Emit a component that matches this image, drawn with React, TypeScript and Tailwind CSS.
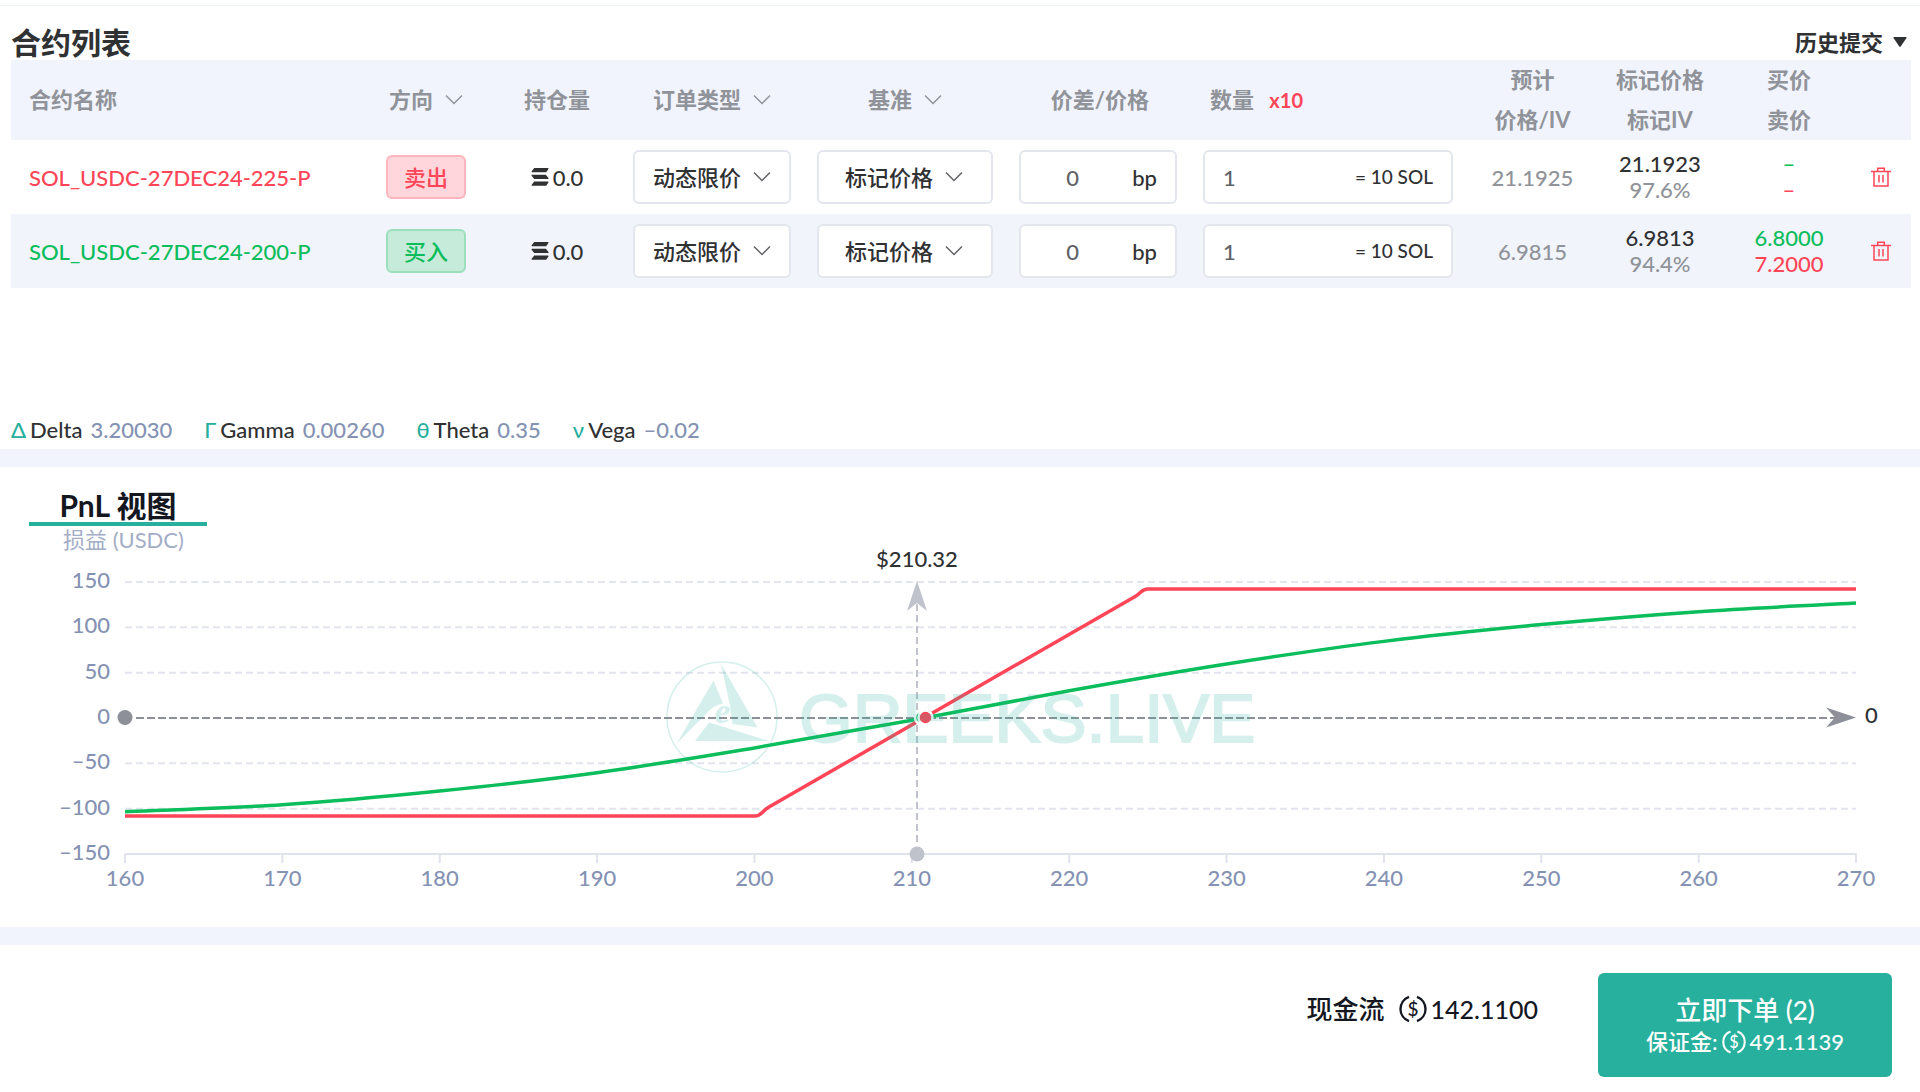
import { useState } from 'react'

type Side = 'sell' | 'buy'

type Contract = {
  name: string
  side: Side
  position: string
  estimate: string
  mark: string
  markIv: string
  bid: string
  ask: string
}

const initialContracts: Contract[] = [
  { name: 'SOL_USDC-27DEC24-225-P', side: 'sell', position: '0.0', estimate: '21.1925', mark: '21.1923', markIv: '97.6%', bid: '–', ask: '–' },
  { name: 'SOL_USDC-27DEC24-200-P', side: 'buy', position: '0.0', estimate: '6.9815', mark: '6.9813', markIv: '94.4%', bid: '6.8000', ask: '7.2000' },
]

const greeks = [
  { symbol: 'Δ', label: 'Delta', value: '3.20030' },
  { symbol: 'Γ', label: 'Gamma', value: '0.00260' },
  { symbol: 'θ', label: 'Theta', value: '0.35' },
  { symbol: 'ν', label: 'Vega', value: '–0.02' },
]

const yTicks = [150, 100, 50, 0, -50, -100, -150]
const xTicks = [160, 170, 180, 190, 200, 210, 220, 230, 240, 250, 260, 270]

// theoretical pnl at each x tick
const currentPnl = [-103.3, -95.6, -80.5, -60.3, -33, -2.5, 30, 59.5, 84.5, 103, 117.3, 126.8]

const px = (price: number) => 125 + ((price - 160) * 1731) / 110
const py = (pnl: number) => 192 - (pnl * 136) / 150

function smoothPath(values: number[]) {
  const pts = values.map((v, i) => [px(xTicks[i]), py(v)])
  let d = `M${pts[0][0]} ${pts[0][1]}`
  for (let i = 0; i < pts.length - 1; i++) {
    const p0 = pts[i - 1] || pts[i]
    const p1 = pts[i]
    const p2 = pts[i + 1]
    const p3 = pts[i + 2] || p2
    d += ` C${p1[0] + (p2[0] - p0[0]) / 6} ${p1[1] + (p2[1] - p0[1]) / 6} ${p2[0] - (p3[0] - p1[0]) / 6} ${p2[1] - (p3[1] - p1[1]) / 6} ${p2[0]} ${p2[1]}`
  }
  return d
}

function Chevron() {
  return (
    <svg width="18" height="12" viewBox="0 0 18 12" fill="none" stroke="currentColor" strokeWidth="1.5" aria-hidden="true">
      <path d="M1 1.5 9 9.5 17 1.5" />
    </svg>
  )
}

function SolIcon() {
  return (
    <svg width="18" height="18" viewBox="0 0 18 18" fill="currentColor" aria-hidden="true">
      <path d="M3.2 0H17a.6.6 0 0 1 .4 1L15.2 4.2H1.1a.6.6 0 0 1-.4-1Z" />
      <path d="M1 6.8H14.8L17.500 10a.6.6 0 0 1-.4 1H3.2L.6 7.800a.6.6 0 0 1 .4-1Z" />
      <path d="M3.200 13.600H17a.6.6 0 0 1 .4 1L15.200 17.800H1.100a.6.6 0 0 1-.4-1Z" />
    </svg>
  )
}

function UsdcIcon({ size }: { size: number }) {
  return (
    <svg width={size} height={size} viewBox="0 0 28 28" fill="none" stroke="currentColor" strokeWidth="2.4" aria-hidden="true">
      <path d="M10 1.800A13 13 0 0 0 10 26.200M18 1.800A13 13 0 0 1 18 26.200" />
      <text x="14" y="20.500" textAnchor="middle" fontSize="19" fill="currentColor" stroke="none">$</text>
    </svg>
  )
}

function TrashIcon() {
  return (
    <svg width="20" height="20" viewBox="0 0 20 20" fill="none" stroke="currentColor" strokeWidth="1.500" aria-hidden="true">
      <path d="M0 4.500H20M3 4.500V19H17V4.500M6.700 4V1.200H13.300V4M8 8V15.500M12 8V15.500" />
    </svg>
  )
}

function FilterHead({ text }: { text: string }) {
  return (
    <button type="button" className="inline-flex items-center gap-3">
      {text}
      <Chevron />
    </button>
  )
}

function PnlChart() {
  return (
    <svg viewBox="0 0 1920 401" className="block w-full text-[22px]">
      <text x="63" y="22" className="fill-[#a3adc6]">损益 (USDC)</text>

      {yTicks.map(t => (
        <g key={t}>
          <text x="110" y={py(t) + 6} textAnchor="end" className="fill-[#8592b3] font-medium">{String(t).replace('-', '–')}</text>
          {t !== 0 && t !== -150 && (
            <line x1="125" x2="1856" y1={py(t)} y2={py(t)} stroke="#e2e5ed" strokeWidth="2" strokeDasharray="7 4" />
          )}
        </g>
      ))}

      <path d="M125 328H1857" stroke="#e0e3ec" strokeWidth="2" />
      {xTicks.map(t => (
        <g key={t}>
          <line x1={px(t)} x2={px(t)} y1="328" y2="337" stroke="#e0e3ec" strokeWidth="2" />
          <text x={px(t)} y="360" textAnchor="middle" className="fill-[#8592b3] font-medium">{t}</text>
        </g>
      ))}

      {/* zero line */}
      <line x1="136" x2="1840" y1="192" y2="192" stroke="#8e9099" strokeWidth="2" strokeDasharray="8 3" />
      <circle cx="125" cy="191.500" r="7.500" fill="#8e9099" />
      <path d="M1856 191.500 1826 181.500 1835 191.500 1826 201.500Z" fill="#8e9099" />
      <text x="1865" y="197" className="fill-[#303133] font-medium">0</text>

      {/* index price */}
      <line x1="917" x2="917" y1="78" y2="320" stroke="#c0c3cc" strokeWidth="2" strokeDasharray="7 4" />
      <circle cx="917" cy="328" r="7.500" fill="#c0c3cc" />
      <path d="M917 55 927 85 917 77 907 85Z" fill="#c0c3cc" />
      <text x="917" y="41" textAnchor="middle" className="fill-[#303133] font-medium">$210.32</text>

      <path d={smoothPath(currentPnl)} fill="none" stroke="#0bbd5b" strokeWidth="3.500" />
      <path
        d="M125 290H755C761 290 761 286 769 281L1136 70C1142 66 1142 63 1148 63H1856"
        fill="none"
        stroke="#ff4557"
        strokeWidth="3.500"
      />
      <circle cx="922" cy="191.500" r="7" fill="#0bbd5b" stroke="#fff" strokeWidth="2.500" />
      <circle cx="925.500" cy="191.500" r="7" fill="#ff4557" stroke="#fff" strokeWidth="2.500" />

      {/* watermark */}
      <g fill="#26b09d" opacity="0.19">
        <circle cx="722" cy="191" r="55" fill="none" stroke="#26b09d" strokeWidth="1.500" />
        <path d="M676.700 217.500 713.500 154.500 723 177.500Q712 180 706 188Z" />
        <path d="M721 138 757.500 201.500 732.500 198 730 180Z" />
        <path d="M695 215 709 196.500 732 203.500 769 215Z" />
        <text x="714.500" y="196.500" className="font-['Liberation_Serif',serif] text-[36px] font-bold italic">e</text>
        <text x="799" y="216" stroke="#26b09d" strokeWidth="2" className="font-['Liberation_Sans',sans-serif] text-[69px]">GREEKS.LIVE</text>
      </g>
    </svg>
  )
}

export default function App() {
  const [contracts, setContracts] = useState(initialContracts)

  const toggleSide = (name: string) => {
    setContracts(contracts.map(c => (c.name === name ? { ...c, side: c.side === 'sell' ? 'buy' : 'sell' } : c)))
  }

  const removeContract = (name: string) => {
    setContracts(contracts.filter(c => c.name !== name))
  }

  return (
    <main className="bg-white pt-[5px] font-['Lato','Noto_Sans','Noto_Sans_CJK_SC',sans-serif] text-[22px] text-[#303133]">
      <section className="border-t border-[#f0f4fc] pr-[9px] pl-[11px]">
        <header className="flex h-[54px] items-end justify-between">
          <h2 className="text-[30px] leading-9 font-bold">合约列表</h2>
          <button type="button" className="flex h-9 items-center gap-[10px] pr-1 font-bold">
            历史提交
            <svg width="14" height="10" viewBox="0 0 14 10" fill="currentColor" aria-hidden="true">
              <path d="M1 0H13Q14 0 13.500 1L7.700 9.500Q7 10.300 6.300 9.500L.5 1Q0 0 1 0Z" />
            </svg>
          </button>
        </header>

        <div className="min-h-[350px]">
          <table className="w-full table-fixed text-center">
            <colgroup>
              <col />
              <col className="w-[136px]" />
              <col className="w-[126px]" />
              <col className="w-[184px]" />
              <col className="w-[202px]" />
              <col className="w-[184px]" />
              <col className="w-[276px]" />
              <col className="w-[133px]" />
              <col className="w-[122px]" />
              <col className="w-[136px]" />
              <col className="w-[54px]" />
            </colgroup>
            <thead className="bg-[#f1f4fd] leading-10 text-[#909399]">
              <tr>
                <th className="pl-[18px] text-left">合约名称</th>
                <th><FilterHead text="方向" /></th>
                <th>持仓量</th>
                <th><FilterHead text="订单类型" /></th>
                <th><FilterHead text="基准" /></th>
                <th className="pl-1">价差/价格</th>
                <th className="pl-5 text-left">
                  数量 <span className="pl-[10px] text-[20px] text-[#ff4557]">x10</span>
                </th>
                <th>预计<br />价格/IV</th>
                <th>标记价格<br />标记IV</th>
                <th>买价<br />卖价</th>
                <th></th>
              </tr>
            </thead>
            <tbody>
              {contracts.map(c => (
                <tr key={c.name} className="h-[74px] even:bg-[#f1f4fb]">
                  <td className={c.side === 'sell' ? 'pl-[18px] text-left font-medium text-[#ff4557]' : 'pl-[18px] text-left font-medium text-[#0bbd5b]'}>
                    {c.name}
                  </td>
                  <td>
                    <button
                      type="button"
                      onClick={() => toggleSide(c.name)}
                      className={
                        c.side === 'sell'
                          ? 'h-11 w-20 rounded-md border-2 border-[#ffb5be] bg-[#ffd6db] align-middle font-medium text-[#ff4557]'
                          : 'h-11 w-20 rounded-md border-2 border-[#9bdfbd] bg-[#c6ebda] align-middle font-medium text-[#0bbd5b]'
                      }
                    >
                      {c.side === 'sell' ? '卖出' : '买入'}
                    </button>
                  </td>
                  <td>
                    <span className="flex items-center justify-center gap-1 font-medium">
                      <SolIcon />
                      {c.position}
                    </span>
                  </td>
                  <td className="px-[13px]">
                    <div className="relative">
                      <select aria-label="订单类型" className="block h-[54px] w-full appearance-none rounded-md border-2 border-[#e3e6ed] bg-white pl-[18px] font-medium">
                        <option>动态限价</option>
                      </select>
                      <span className="pointer-events-none absolute inset-y-0 right-5 flex items-center text-[#606266]"><Chevron /></span>
                    </div>
                  </td>
                  <td className="px-[13px]">
                    <div className="relative">
                      <select aria-label="基准" className="block h-[54px] w-full appearance-none rounded-md border-2 border-[#e3e6ed] bg-white pl-[26px] font-medium">
                        <option>标记价格</option>
                      </select>
                      <span className="pointer-events-none absolute inset-y-0 right-[30px] flex items-center text-[#606266]"><Chevron /></span>
                    </div>
                  </td>
                  <td className="px-[13px]">
                    <label className="flex h-[54px] items-center rounded-md border-2 border-[#e3e6ed] bg-white pr-[18px] font-medium">
                      <input aria-label="价差" defaultValue="0" className="w-full min-w-0 pr-2 text-center text-[#606266] outline-none" />
                      bp
                    </label>
                  </td>
                  <td className="px-[13px]">
                    <label className="flex h-[54px] items-center rounded-md border-2 border-[#e3e6ed] bg-white px-[18px] text-[19px] font-medium">
                      <input aria-label="数量" defaultValue="1" className="w-full min-w-0 text-[22px] text-[#606266] outline-none" />
                      <span className="whitespace-nowrap">= 10 SOL</span>
                    </label>
                  </td>
                  <td className="font-medium text-[#909399]">{c.estimate}</td>
                  <td className="leading-[26px] font-medium">
                    {c.mark}
                    <div className="text-[#909399]">{c.markIv}</div>
                  </td>
                  <td className="leading-[26px] font-medium text-[#0bbd5b]">
                    {c.bid}
                    <div className="text-[#ff4557]">{c.ask}</div>
                  </td>
                  <td className="pr-[6px]">
                    <button type="button" aria-label="删除" onClick={() => removeContract(c.name)} className="mx-auto block text-[#ff4557]">
                      <TrashIcon />
                    </button>
                  </td>
                </tr>
              ))}
            </tbody>
          </table>
        </div>

        <ul className="flex h-[39px] items-center gap-8 font-medium">
          {greeks.map(g => (
            <li key={g.label} className="flex gap-1">
              <span className="text-[#26b09d]">{g.symbol}</span>
              <span>{g.label}</span>
              <span className="pl-1 text-[#8592b3]">{g.value}</span>
            </li>
          ))}
        </ul>
      </section>

      <section className="border-y-[18px] border-[#f1f4fd]">
        <h3 className="ml-[29px] w-[178px] border-b-4 border-[#26b09d] pt-[21px] text-center text-[30px] leading-[34px] font-bold text-[#14171f]">PnL 视图</h3>
        <PnlChart />
      </section>

      <footer className="flex items-start justify-end gap-[60px] px-7 pt-7 pb-[15px] text-[26px] leading-9 font-medium text-[#14171f]">
        <p className="mt-[18px] flex items-center">
          现金流
          <span className="flex items-center gap-1 pl-[14px] text-[25px]">
            <UsdcIcon size={28} />
            142.1100
          </span>
        </p>
        <button type="button" className="flex h-[104px] w-[294px] flex-col items-center justify-center rounded-md bg-[#26b09d] pb-[2px] text-white">
          立即下单 (2)
          <span className="flex items-center gap-1 text-[22px] leading-7">
            保证金:
            <UsdcIcon size={24} />
            491.1139
          </span>
        </button>
      </footer>
    </main>
  )
}
